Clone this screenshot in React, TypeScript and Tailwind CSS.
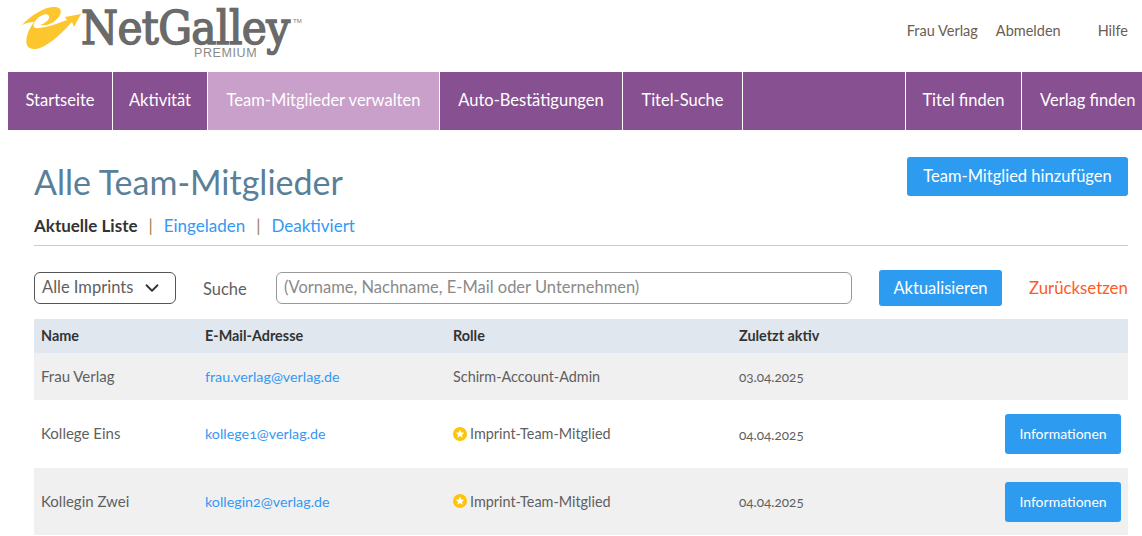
import { ChevronDown } from 'lucide-react';

const NAV_ITEMS = [
  { label: 'Startseite', width: 'w-[105px]' },
  { label: 'Aktivität', width: 'w-[95px]' },
  { label: 'Team-Mitglieder verwalten', width: 'w-[232px]', active: true },
  { label: 'Auto-Bestätigungen', width: 'w-[183px]' },
  { label: 'Titel-Suche', width: 'w-[120px]' },
  { label: '', width: 'w-[163px]' },
  { label: 'Titel finden', width: 'w-[116px]' },
  { label: 'Verlag finden', width: 'w-[120px] justify-start! pl-[18px] border-r-0!' },
];

const MEMBERS = [
  { name: 'Frau Verlag', email: 'frau.verlag@verlag.de', role: 'Schirm-Account-Admin', last: '03.04.2025', star: false, height: 'h-[47px]', shaded: true },
  { name: 'Kollege Eins', email: 'kollege1@verlag.de', role: 'Imprint-Team-Mitglied', last: '04.04.2025', star: true, height: 'h-[68px]', shaded: false },
  { name: 'Kollegin Zwei', email: 'kollegin2@verlag.de', role: 'Imprint-Team-Mitglied', last: '04.04.2025', star: true, height: 'h-[67px]', shaded: true },
];

const Logo = () => (
  <div className="relative w-[305px] h-[62px]">
    <svg className="absolute left-0 top-0" width="90" height="56" viewBox="0 0 90 56">
      <path
        d="M22 25 C32 14 46 6 56 7 C63 8 62 15 56 20 C52 24 46 26 40 25 C46 23 50 19 49 16 C47 12 40 15 36 20 C32 25 33 29 39 28 C47 27 57 24 67 20 L65 17 L81 14 L74 27 L72 22 C62 33 48 47 36 49 C27 50 25 44 27 36 C28 31 31 26 34 22 C30 22 26 23 22 25 Z"
        fill="#fcc72e"
      />
    </svg>
    <span className="absolute left-[81px] top-[9px] font-['DejaVu_Serif',serif] [font-stretch:condensed] [-webkit-text-stroke:1.4px_#6a6a6a] text-[47px] leading-[37px] tracking-[-0.6px] text-[#6a6a6a]">NetGalley</span>
    <span className="absolute left-[293px] top-[17px] font-['Liberation_Sans',sans-serif] text-[6px] leading-[8px] text-[#777777]">TM</span>
    <span className="absolute left-[194px] top-[47px] font-['Liberation_Sans',sans-serif] text-[12.5px] leading-[12px] tracking-[0.6px] text-[#8a8a8a]">PREMIUM</span>
  </div>
);

const Star = () => (
  <svg className="w-[14px] h-[14px] shrink-0" viewBox="0 0 14 14">
    <circle cx="7" cy="7" r="7" fill="#fdc408" />
    <path d="M7 2.6 L8.3 5.4 L11.3 5.7 L9 7.7 L9.7 10.7 L7 9.1 L4.3 10.7 L5 7.7 L2.7 5.7 L5.7 5.4 Z" fill="#fff" />
  </svg>
);

export default function App() {
  return (
    <div className="w-[1142px] h-[536px] overflow-hidden bg-white font-['Lato',sans-serif] text-[#5f5f5f]">
      <header className="flex h-[72px] justify-between pr-[14px]">
        <Logo />
        <div className="flex gap-[18px] pt-[21px] text-[14.5px] leading-[20px] text-[#6b5d50]">
          <a>Frau Verlag</a>
          <a>Abmelden</a>
          <a className="ml-[19px]">Hilfe</a>
        </div>
      </header>

      <nav className="flex h-[58px] ml-2 w-[1134px] overflow-hidden bg-[#875090]">
        {NAV_ITEMS.map(item => (
          <div
            key={item.label || 'blank'}
            className={`${item.width} shrink-0 flex items-center justify-center pb-[1px] border-r border-white text-[16.5px] text-white whitespace-nowrap ${
              item.active ? 'bg-[#c9a0c9]' : ''
            }`}
          >
            {item.label}
          </div>
        ))}
      </nav>

      <main className="pl-[34px] pr-[14px]">
        <div className="flex justify-between items-start pt-[27px] h-[73px]">
          <h1 className="text-[34px] leading-[50px] text-[#5a7f99] font-normal">Alle Team-Mitglieder</h1>
          <button className="w-[221px] h-[39px] rounded-[3px] bg-[#2d9cf0] text-white text-[16.5px]">Team-Mitglied hinzufügen</button>
        </div>

        <div className="flex items-center h-[43px] pt-[3px] border-b border-[#cccccc] text-[17px]">
          <span className="font-bold text-[#333333]">Aktuelle Liste</span>
          <span className="mx-[11px] text-[#a08050]">|</span>
          <a className="text-[#3399f3]">Eingeladen</a>
          <span className="mx-[11px] text-[#a08050]">|</span>
          <a className="text-[#3399f3]">Deaktiviert</a>
        </div>

        <div className="flex items-center h-[73px] pt-[11px] text-[16.5px]">
          <div className="flex items-center justify-between w-[142px] h-[32px] rounded-[6px] border border-[#555555] pl-[7px] pr-[12px] pb-[1px]">
            <span>Alle Imprints</span>
            <ChevronDown className="w-[22px] h-[22px] text-[#333333]" strokeWidth={2} />
          </div>
          <span className="ml-[27px] w-[73px] pt-[2px]">Suche</span>
          <div className="flex items-center w-[576px] h-[32px] rounded-[6px] border border-[#999999] px-[7px] pb-[1px] text-[#8a8a8a]">
            (Vorname, Nachname, E-Mail oder Unternehmen)
          </div>
          <button className="ml-[27px] w-[123px] h-[36px] rounded-[3px] bg-[#2d9cf0] text-white">Aktualisieren</button>
          <a className="ml-[27px] text-[16.8px] text-[#ff5a1f] whitespace-nowrap">Zurücksetzen</a>
        </div>

        <div className="grid grid-cols-[164px_248px_286px_1fr] items-center h-[34px] pl-[7px] bg-[#e0e7ef] text-[14.4px] font-bold text-[#333333]">
          <span>Name</span>
          <span>E-Mail-Adresse</span>
          <span>Rolle</span>
          <span>Zuletzt aktiv</span>
        </div>

        {MEMBERS.map(member => (
          <div
            key={member.email}
            className={`grid grid-cols-[164px_248px_286px_1fr_116px] items-center ${member.height} pl-[7px] pr-[7px] text-[15px] ${
              member.shaded ? 'bg-[#f0f0f0]' : 'bg-white'
            }`}
          >
            <span className="pb-[1px]">{member.name}</span>
            <a className="text-[14.3px] text-[#3399f3] oldstyle-nums">{member.email}</a>
            <span className="flex items-center gap-[3px] text-[14.4px]">
              {member.star && <Star />}
              {member.role}
            </span>
            <span className="text-[13.5px] pt-[2px] oldstyle-nums">{member.last}</span>
            {member.star && (
              <button className="w-[116px] h-[40px] pb-[1px] rounded-[3px] bg-[#2d9cf0] text-white text-[14px]">Informationen</button>
            )}
          </div>
        ))}
      </main>
    </div>
  );
}
